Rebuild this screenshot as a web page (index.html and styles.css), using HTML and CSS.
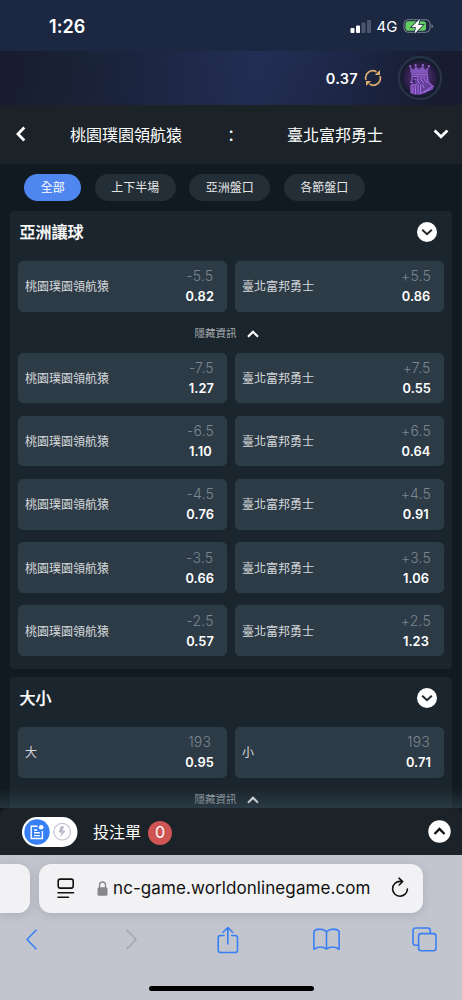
FILE: index.html
```html
<!DOCTYPE html>
<html lang="zh-Hant">
<head>
<meta charset="utf-8">
<meta name="viewport" content="width=device-width, initial-scale=1">
<title>投注</title>
<link rel="stylesheet" href="styles.css">
</head>
<body>
<div class="phone">
  <div class="status">
    <span class="time">1:26</span>
    <svg class="status-icons" width="84" height="18" viewBox="0 0 84 18">
      <rect x="0.5" y="11" width="4" height="5" rx="1" fill="#fff"/>
      <rect x="6" y="8.5" width="4" height="7.5" rx="1" fill="#fff"/>
      <rect x="11.5" y="5.5" width="4" height="10.5" rx="1" fill="#4b556b"/>
      <rect x="17" y="3" width="4" height="13" rx="1" fill="#4b556b"/>
      <text class="net" x="26.5" y="15.4">4G</text>
      <rect x="54" y="2.7" width="26" height="12.6" rx="4" fill="none" stroke="#78818f"/>
      <path d="M81.5 7.200q1.500.3 1.500 2t-1.500 2z" fill="#78818f"/>
      <rect x="55.500" y="4.200" width="20.500" height="9.600" rx="2.500" fill="#62cb61"/>
      <path d="M70 1.700 61.500 10.200H66L64.500 16.700 73 8H68.300z" fill="#fff" stroke="#1c2842" stroke-width="1.500" paint-order="stroke"/>
    </svg>
  </div>
  <header class="account">
    <span class="balance">0.37</span>
    <svg class="refresh" width="18" height="18" viewBox="0 0 18 18" fill="none" stroke="#d9ac6e" stroke-width="1.7">
      <path d="M2 11A7 7 0 0 1 12.500 3"/><path d="M16 7A7 7 0 0 1 5.500 15"/>
      <path d="M16 1v5h-5.200zM2 17v-5h5.200z" fill="#d9ac6e" stroke="none"/>
    </svg>
    <svg class="avatar" width="44" height="44" viewBox="0 0 44 44">
      <defs><radialGradient id="glow"><stop offset="0" stop-color="#4a2c78"/><stop offset=".6" stop-color="#3f2660"/><stop offset="1" stop-color="#231b3b"/></radialGradient></defs>
      <circle cx="22" cy="22" r="21" fill="#171d31" stroke="#2b3548" stroke-width="2"/>
      <circle cx="22" cy="22" r="17" fill="url(#glow)"/>
      <path d="M13 18h17l1 8 5 5-10 6.500-5 1.500-8-1v-8l2-5z" fill="#64409b"/>
      <path d="M12.500 16.500 12 11l4 3 1.500-4 3.500 3.500L25 10l2 4 4-3-1.500 5.500z" fill="#8356bd"/>
      <path d="M15 19.500h4v3h-2v5h-2.500z" fill="#3a2560"/>
      <g fill="none" stroke="#a56fe4" stroke-width="1">
        <path d="M13 17h17M13.500 18.800H30M14 20.500h5M14 21v3l-1.500 2.500H15M15.500 23h3M20 20v5l2 3M23 20v4l3 3M26 20v3l3 4M29 20l1 6 5.500 5"/>
        <path d="M13 29h5l2-2M13 29v8M15 30.500v7M17.500 30.500v8M20 29v9.500M22.500 29v9M24 28l2 4M22 38l13.500-8M26 36.500l9-4"/>
      </g>
      <g fill="#a56fe4"><rect x="11.300" y="9.300" width="1.800" height="1.800"/><rect x="16.700" y="8.300" width="1.800" height="1.800"/><rect x="24" y="8.300" width="1.800" height="1.800"/><rect x="30" y="9.300" width="1.800" height="1.800"/></g>
    </svg>
  </header>
  <div class="match">
    <svg class="back" width="12" height="16" viewBox="0 0 12 16"><path d="M9.300 1.600 3 8l6.300 6.400" class="chev"/></svg>
    <span class="team home">桃園璞園領航猿</span>
    <span class="colon">:</span>
    <span class="team away">臺北富邦勇士</span>
    <svg class="more" width="16" height="12" viewBox="0 0 16 12"><path d="M1.600 2.600 8 8.800l6.400-6.200" class="chev"/></svg>
  </div>
  <nav class="filters">
    <span class="chip active">全部</span><span class="chip">上下半場</span><span class="chip">亞洲盤口</span><span class="chip">各節盤口</span>
  </nav>
  <main class="markets">
    <section class="panel">
      <div class="panel-head"><h2>亞洲讓球</h2><svg width="20" height="20" viewBox="0 0 20 20"><circle cx="10" cy="10" r="10" fill="#fff"/><path d="m5.200 7.700 4.800 4.500 4.800-4.500" class="ink"/></svg></div>
      <div class="pair">
        <div class="card"><span>桃園璞園領航猿</span><div class="odds"><i>-5.5</i><b>0.82</b></div></div>
        <div class="card"><span>臺北富邦勇士</span><div class="odds"><i>+5.5</i><b>0.86</b></div></div>
      </div>
      <div class="toggle">隱藏資訊<svg width="12" height="8" viewBox="0 0 12 8"><path d="m1 6.800 5-5 5 5" class="tick"/></svg></div>
      <div class="rows">
        <div class="pair">
          <div class="card"><span>桃園璞園領航猿</span><div class="odds"><i>-7.5</i><b>1.27</b></div></div>
          <div class="card"><span>臺北富邦勇士</span><div class="odds"><i>+7.5</i><b>0.55</b></div></div>
        </div>
        <div class="pair">
          <div class="card"><span>桃園璞園領航猿</span><div class="odds"><i>-6.5</i><b>1.10</b></div></div>
          <div class="card"><span>臺北富邦勇士</span><div class="odds"><i>+6.5</i><b>0.64</b></div></div>
        </div>
        <div class="pair">
          <div class="card"><span>桃園璞園領航猿</span><div class="odds"><i>-4.5</i><b>0.76</b></div></div>
          <div class="card"><span>臺北富邦勇士</span><div class="odds"><i>+4.5</i><b>0.91</b></div></div>
        </div>
        <div class="pair">
          <div class="card"><span>桃園璞園領航猿</span><div class="odds"><i>-3.5</i><b>0.66</b></div></div>
          <div class="card"><span>臺北富邦勇士</span><div class="odds"><i>+3.5</i><b>1.06</b></div></div>
        </div>
        <div class="pair">
          <div class="card"><span>桃園璞園領航猿</span><div class="odds"><i>-2.5</i><b>0.57</b></div></div>
          <div class="card"><span>臺北富邦勇士</span><div class="odds"><i>+2.5</i><b>1.23</b></div></div>
        </div>
      </div>
    </section>
    <section class="panel cut">
      <div class="panel-head"><h2>大小</h2><svg width="20" height="20" viewBox="0 0 20 20"><circle cx="10" cy="10" r="10" fill="#fff"/><path d="m5.200 7.700 4.800 4.500 4.800-4.500" class="ink"/></svg></div>
      <div class="pair">
        <div class="card"><span>大</span><div class="odds"><i>193</i><b>0.95</b></div></div>
        <div class="card"><span>小</span><div class="odds"><i>193</i><b>0.71</b></div></div>
      </div>
      <div class="toggle">隱藏資訊<svg width="12" height="8" viewBox="0 0 12 8"><path d="m1 6.800 5-5 5 5" class="tick"/></svg></div>
    </section>
  </main>
  <div class="slip">
    <svg class="switch" width="56" height="30" viewBox="0 0 56 30">
      <rect width="55.500" height="30" rx="15" fill="#fff"/>
      <circle cx="15" cy="15" r="12.700" fill="#377ff5"/>
      <path d="M15.500 9.200H9.200v12.300h11.200V14M12 13h3.200M12 15.800h5.800M12 18.600h5.800" fill="none" stroke="#fff" stroke-width="1.400"/>
      <circle cx="19.200" cy="10.300" r="2.300" fill="#fff"/>
      <circle cx="40.200" cy="14.700" r="8.300" fill="none" stroke="#c3c4d0" stroke-width="1.200"/>
      <path d="M42 9.200h-3.400L36.500 15.500h3l-1.300 5 5.500-7h-3z" fill="#b9bac8"/>
    </svg>
    <span class="slip-title">投注單</span><span class="badge">0</span>
    <svg class="expand" width="23" height="23" viewBox="0 0 23 23"><circle cx="11.500" cy="11.500" r="11.200" fill="#fff"/><path d="m6.500 14 5-5 5 5" class="ink dark"/></svg>
  </div>
  <footer class="browser">
    <div class="tabs">
      <div class="prev-tab"></div>
      <div class="address">
        <svg class="reader" width="18" height="21" viewBox="0 0 18 21" fill="none" stroke="#111" stroke-width="1.600" stroke-linecap="round"><rect x="1.200" y="1.100" width="15" height="9" rx="2"/><path d="M1 14.700h15.500M1 19.300h10.500"/></svg>
        <svg class="lock" width="11" height="15" viewBox="0 0 11 15"><path d="M2.500 7V4a3 3 0 0 1 6 0v3" fill="none" stroke="#87878a" stroke-width="1.300"/><rect x=".5" y="6.300" width="10" height="8.400" rx="1.500" fill="#87878a"/></svg>
        <span class="url">nc-game.worldonlinegame.com</span>
        <svg class="reload" width="18" height="21" viewBox="0 0 18 21" fill="none" stroke="#111" stroke-width="1.600" stroke-linecap="round" stroke-linejoin="round"><path d="M10.800 4.400H9A7.400 7.400 0 1 0 16.400 12M8 1.200l3.700 3.300L8.200 8"/></svg>
      </div>
    </div>
    <div class="tools">
      <svg width="13" height="21" viewBox="0 0 13 21"><path d="M11 1.200 2 10.500l9 9.300" stroke="#397ff4"/></svg>
      <svg class="forward" width="13" height="21" viewBox="0 0 13 21"><path d="m2 1.200 9 9.300-9 9.300" stroke="#a5a6ad"/></svg>
      <svg class="share" width="22" height="28" viewBox="0 0 22 28"><path d="M7 9.500H3.500a2.300 2.300 0 0 0-2.300 2.300v12.400a2.300 2.300 0 0 0 2.300 2.300h14.700a2.300 2.300 0 0 0 2.300-2.300V11.800a2.300 2.300 0 0 0-2.300-2.300h-3.500M10.800 18V1.700M6 6.300l4.800-4.800 4.800 4.800" stroke="#397ff4"/></svg>
      <svg width="27" height="23" viewBox="0 0 27 23"><path d="M13.500 3.600C11.500 1.700 9 1.100 6.500 1.100S2 2 .9 3.200v18C5 18.600 10 18.500 13.500 21c3.500-2.500 8.500-2.400 12.600.2v-18C25 2 22.800 1.100 20.500 1.100s-5 .6-7 2.500zV21" stroke="#397ff4"/></svg>
      <svg width="25" height="25" viewBox="0 0 25 25"><path d="M6.500 18.300H3.500A2.500 2.500 0 0 1 1 15.800V3.500A2.500 2.500 0 0 1 3.500 1h12.300a2.500 2.500 0 0 1 2.500 2.500v3" stroke="#397ff4"/><rect x="6.600" y="6.600" width="17.400" height="17.200" rx="2.500" stroke="#397ff4"/></svg>
    </div>
    <div class="home-bar"></div>
  </footer>
</div>
</body>
</html>
```

FILE: styles.css
```css
* { box-sizing: border-box; }
body { margin: 0; background: #111a20; font-family: Inter, "Noto Sans CJK TC", sans-serif; color: #fff; }
svg { display: block; flex: none; }
.phone { width: 462px; height: 1000px; overflow: hidden; display: flex; flex-direction: column; }
.status { height: 51px; flex: none; background: #1c2842; display: flex; justify-content: space-between; padding: 15px 28px 0 49px; }
.time { font-size: 18px; font-weight: 600; line-height: 24px; letter-spacing: .1px; }
.status-icons { margin-top: 2px; overflow: visible; }
.net { font-size: 15px; font-weight: 400; fill: #fff; }
.account { height: 54px; flex: none; display: flex; align-items: center; justify-content: flex-end; padding-right: 20px; background: linear-gradient(15deg, rgba(22,28,49,.3), transparent), linear-gradient(100deg, #171b2d 0, #192232 12%, #1d2743 30%, #25305a 55%, #1d2747 75%, #171c2f 94%); }
.balance { font-size: 14.500px; font-weight: 600; letter-spacing: .3px; }
.refresh { margin: 0 16px 0 6px; }
.match { height: 59px; flex: none; background: #1b2228; display: flex; align-items: center; padding: 0 13px 2px 15px; font-size: 16px; font-weight: 400; }
.chev { fill: none; stroke: #fff; stroke-width: 2.800; }
.home { margin-left: 43px; }
.colon { width: 105px; text-align: center; font-size: 20px; padding-right: 7px; }
.more { margin-left: auto; }
.filters { height: 47px; flex: none; display: flex; gap: 13.700px; padding: 10px 0 0 24.300px; }
.chip { height: 27px; padding: 0 16.400px; border-radius: 14px; background: #242e36; color: #e4e6e7; font-size: 12px; line-height: 28px; }
.active { background: #5086ef; color: #fff; }
.markets { height: 597px; flex: none; overflow: hidden; padding: 0 10px; position: relative; }
.markets::after { content: ""; position: absolute; left: 0; right: 0; bottom: 0; height: 20px; background: linear-gradient(transparent, rgba(57,78,90,.5)); }
.panel { height: 457.500px; background: #1b252d; border-radius: 4px; padding: 0 8px; margin-bottom: 8.500px; }
.panel-head { height: 50px; padding: 0 7px 8px 1.500px; display: flex; align-items: center; justify-content: space-between; }
h2 { margin: 0; font-size: 16px; font-weight: 500; line-height: 24px; -webkit-text-stroke: .25px #fff; }
.ink { fill: none; stroke: #22272d; stroke-width: 2; }
.dark { stroke: #111; stroke-width: 2.300; }
.pair { display: grid; grid-template-columns: 1fr 1fr; gap: 8px; }
.card { height: 50.500px; border-radius: 5px; background: #2d3b47; border: 1px solid #2b3e47; padding: 0 12px 0 6px; display: flex; justify-content: space-between; align-items: center; font-size: 12px; color: #d5d8da; }
.card > span { padding-bottom: 1px; }
.odds { display: flex; flex-direction: column; align-items: center; }
.odds i { font-style: normal; font-size: 14px; letter-spacing: .2px; font-weight: 300; line-height: 21px; color: #7b8690; }
.odds b { font-size: 12.800px; letter-spacing: .1px; line-height: 21px; font-weight: 600; color: #fff; }
.toggle { height: 41.200px; display: flex; align-items: center; justify-content: center; gap: 10px; padding: 4px 9px 0 0; font-size: 10.500px; line-height: 16px; color: #a5abaf; }
.tick { fill: none; stroke: #fff; stroke-width: 2.200; }
.rows { display: grid; row-gap: 12.700px; }
.slip { height: 47px; flex: none; background: #1b2228; border-radius: 8px 8px 0 0; display: flex; align-items: center; padding: 0 11px 0 21.500px; }
.slip-title { font-size: 16px; margin-left: 15.500px; padding-bottom: 1px; }
.badge { width: 24px; height: 24px; margin: 3px 0 0 7px; border-radius: 50%; background: #ce5553; text-align: center; font-size: 16px; line-height: 22px; }
.expand { margin-left: auto; }
.browser { height: 145px; flex: none; background: #c2c5ce; }
.tabs { height: 62px; padding-top: 9px; display: flex; gap: 9px; }
.prev-tab { width: 30px; height: 48.500px; background: #f2f2f4; border-radius: 0 12px 12px 0; box-shadow: 0 2px 10px rgba(60,65,80,.18); }
.address { width: 384px; height: 48.500px; background: #f2f2f4; border-radius: 12px; box-shadow: 0 2px 10px rgba(60,65,80,.18); display: flex; align-items: center; padding: 0 14.500px 0 18px; color: #111; }
.lock { margin: 0 5px 0 22px; }
.url { width: 260px; font-size: 17px; letter-spacing: .09px; line-height: 24px; white-space: nowrap; }
.reload { margin: -2px 0 0 auto; }
.tools { width: 492px; height: 45px; margin-left: -18px; display: grid; grid-template-columns: repeat(5, 98.400px); justify-items: center; align-items: center; }
.tools svg { fill: none; stroke-width: 1.600; stroke-linejoin: round; stroke-linecap: round; }
.forward { margin-left: 3px; }
.home-bar { width: 165px; height: 5.500px; margin: 23.500px auto 0; border-radius: 3px; background: #000; }
```
